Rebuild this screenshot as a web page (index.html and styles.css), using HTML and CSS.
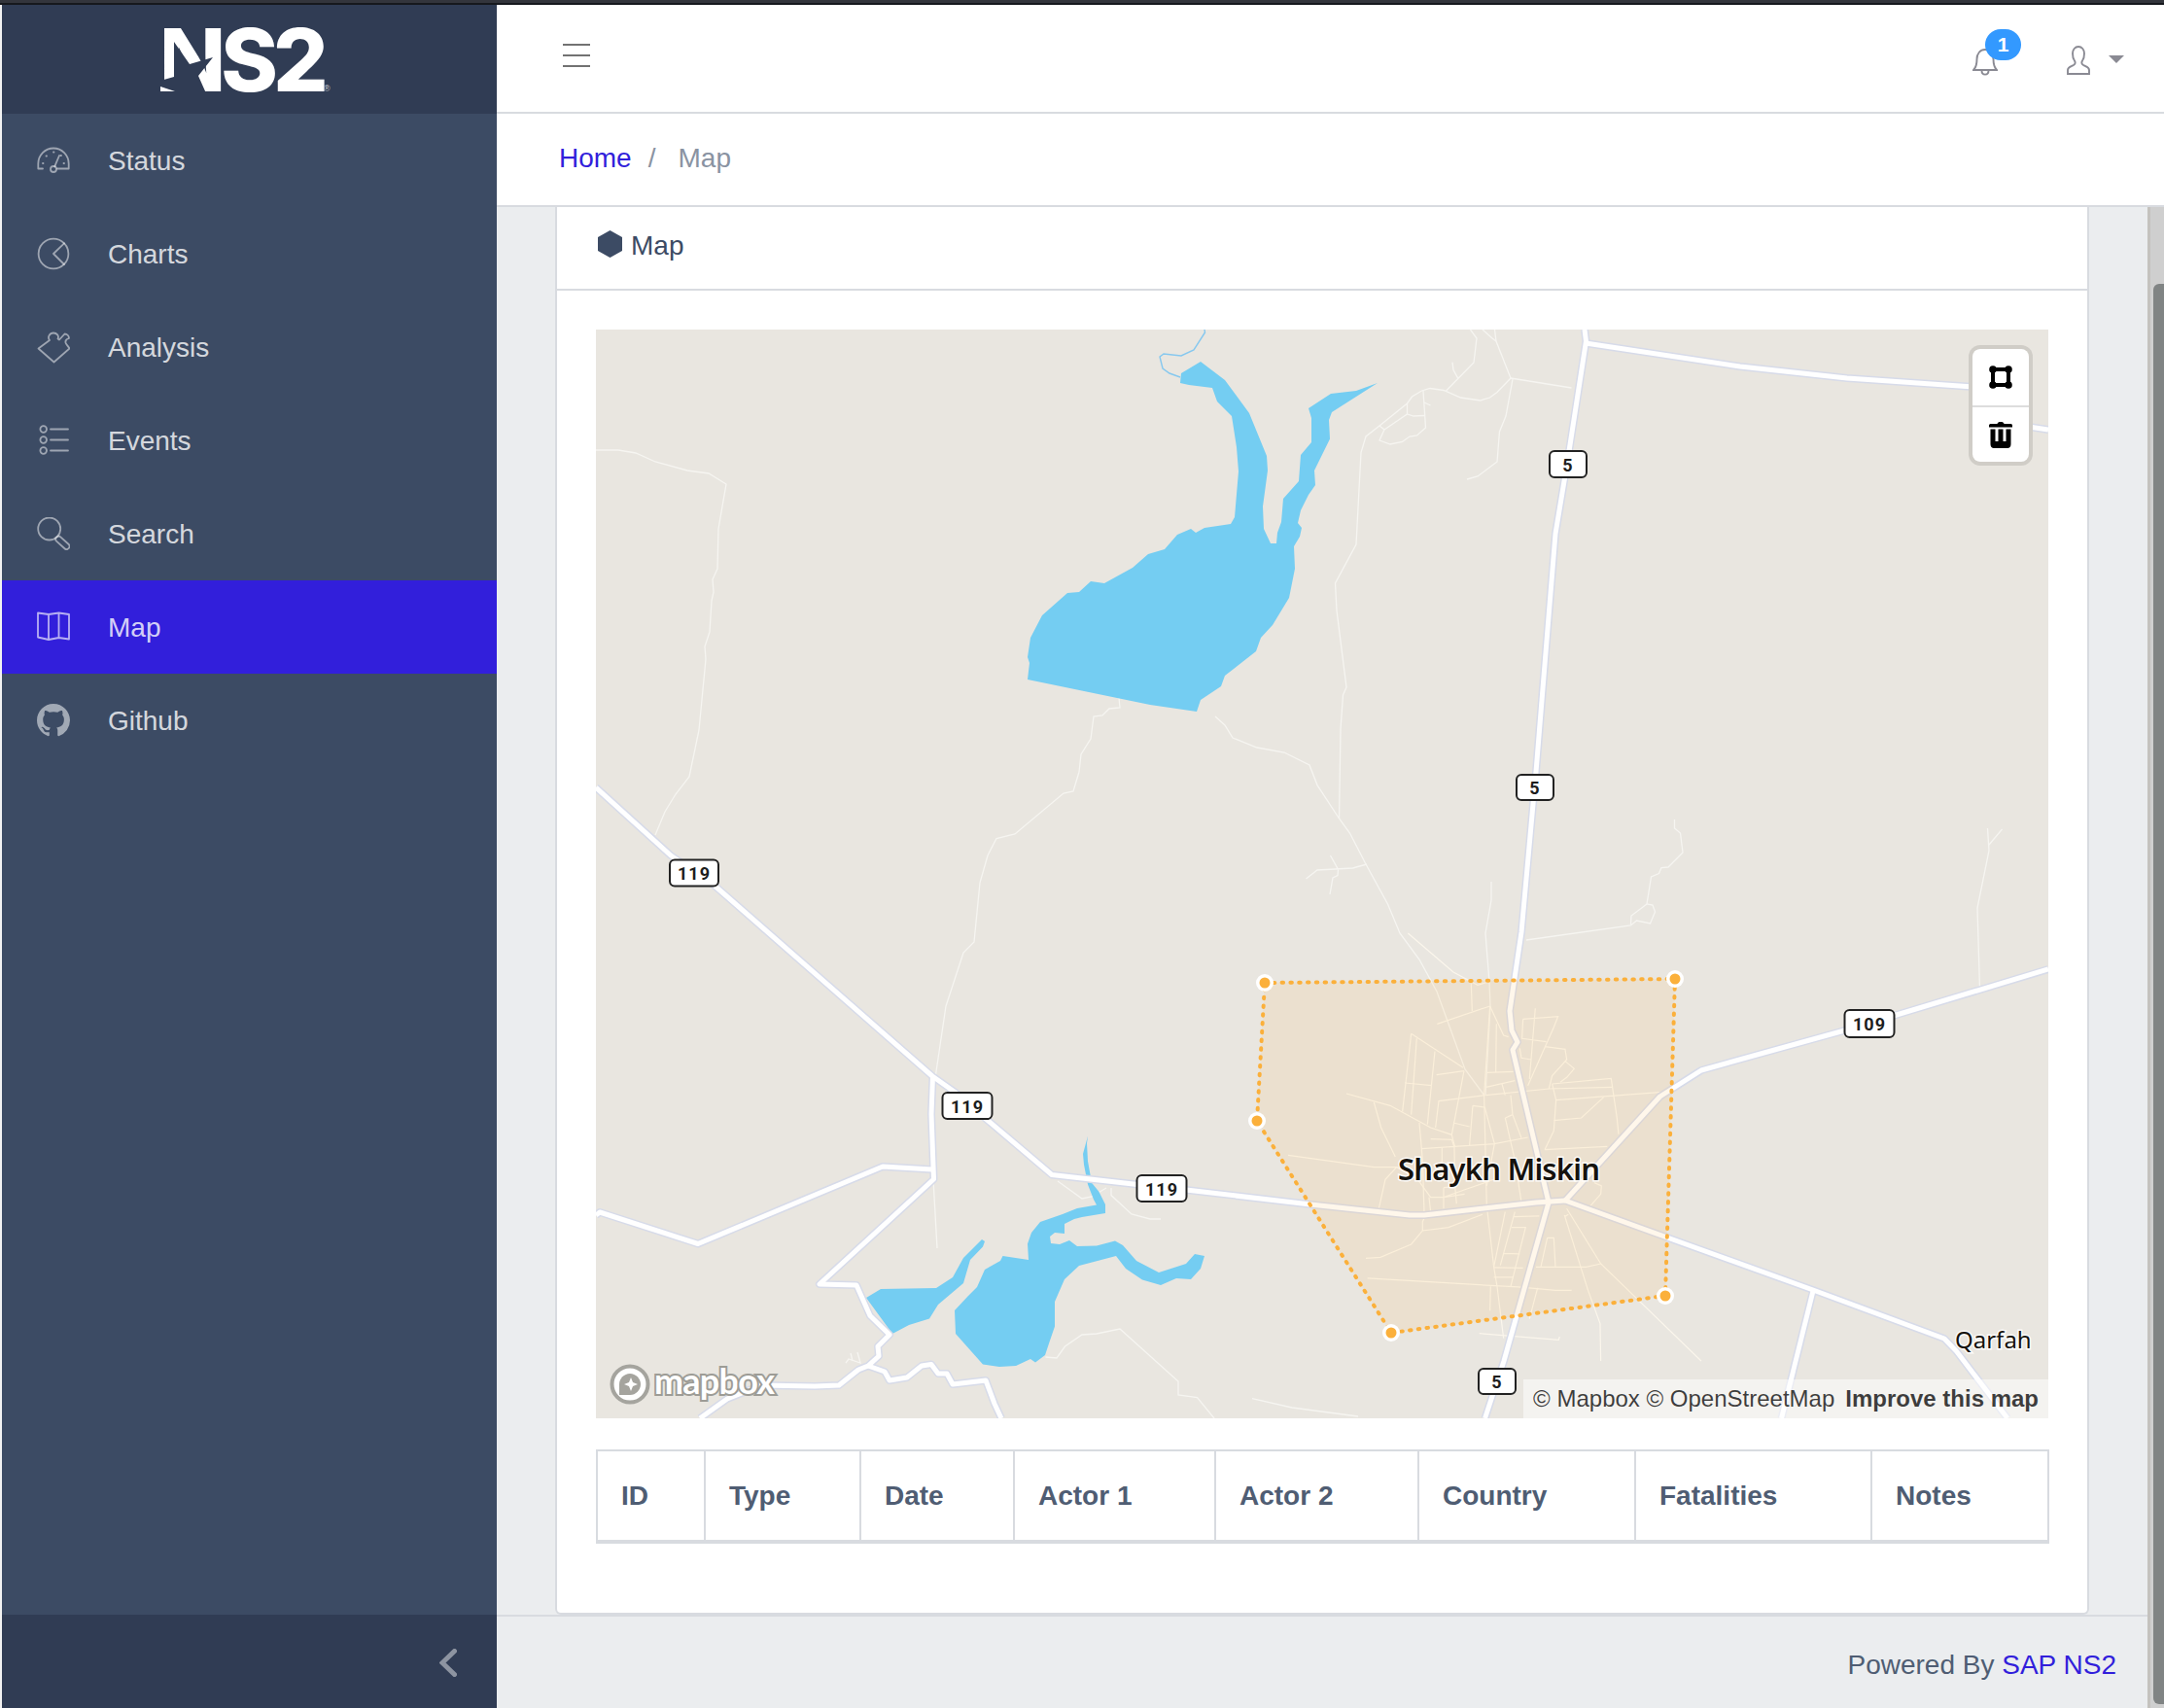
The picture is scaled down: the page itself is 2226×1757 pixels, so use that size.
FILE: index.html
```html
<!DOCTYPE html>
<html lang="en">
<head>
    <meta charset="UTF-8">
    <title>NS2 - Map</title>
    <link rel="stylesheet" href="styles.css">
</head>

<body>

<div class="window-edge"></div>

<div class="app">
    <!-- SIDEBAR -->
    <aside class="sidebar">
        <div class="brand">
            <svg class="brand-logo" viewBox="-5 -10 190 110">
                <text class="brand-text" x="-1" y="78">NS2</text>
                <polygon class="brand-cut" points="0,67 14,63 14,27 30,50 54,43 39,62 47,80 14,80 0,74"/>
                <polygon class="brand-fill" points="0,73 15,78 0,78"/>
                <text class="brand-reg" x="168" y="78">®</text>
            </svg>
        </div>

        <nav class="nav">
            <a class="nav-item">
                <svg class="nav-icon" viewBox="0 0 34 34">
                    <path d="M6 25.500H1.300V20.500A15.700 16 0 0 1 32.700 20.500V25.500H21"/>
                    <circle cx="17" cy="26" r="3"/>
                    <path d="M18.300 23.200 23 12M9.500 12.500h.5M17 8.500h.5M6 20h.5M27.500 20h.5M24.500 12h.5"/>
                </svg>
                <span>Status</span>
            </a>
            <a class="nav-item">
                <svg class="nav-icon" viewBox="0 0 34 34">
                    <circle cx="17" cy="17" r="15.400"/>
                    <path d="M28 6.300 17 17 28 28"/>
                </svg>
                <span>Charts</span>
            </a>
            <a class="nav-item">
                <svg class="nav-icon" viewBox="0 0 34 34">
                    <path d="M1.500 18.500 13 10C10.500 7 13 2.500 17 2.500 20.500 2.500 23 5.500 21.500 8.500L23 9.500 28.500 3.500C31 3.500 33 5.500 33 8 31 8.500 29 10 29.500 12.500 30 14.500 31.500 15 33.500 18.500L17.500 32.500Z"/>
                </svg>
                <span>Analysis</span>
            </a>
            <a class="nav-item">
                <svg class="nav-icon" viewBox="0 0 34 34">
                    <circle cx="6.700" cy="5.500" r="3.300"/>
                    <circle cx="6.700" cy="16.500" r="3.300"/>
                    <circle cx="6.700" cy="27.500" r="3.300"/>
                    <path d="M14 5.500H32M14 16.500H32M14 27.500H32"/>
                </svg>
                <span>Events</span>
            </a>
            <a class="nav-item">
                <svg class="nav-icon" viewBox="0 0 34 34">
                    <circle cx="12.700" cy="12" r="11.500"/>
                    <rect x="18" y="23" width="17" height="6" rx="3" transform="rotate(42 26 26)"/>
                </svg>
                <span>Search</span>
            </a>
            <a class="nav-item active">
                <svg class="nav-icon" viewBox="0 0 34 34">
                    <path d="M1 2.500 12 4 22.500 2.500 33 4V29.500L22.500 28 12 30 1 27.500ZM12 4V30M22.500 2.500V28"/>
                </svg>
                <span>Map</span>
            </a>
            <a class="nav-item">
                <svg class="nav-icon nav-icon-solid" viewBox="0 0 16 16">
                    <path d="M8 0C3.580 0 0 3.580 0 8c0 3.540 2.290 6.530 5.470 7.590.4.070.55-.17.55-.38 0-.19-.01-.82-.01-1.490-2.010.37-2.530-.49-2.690-.94-.09-.23-.48-.94-.82-1.130-.28-.15-.68-.52-.01-.53.63-.01 1.080.58 1.230.82.72 1.210 1.870.87 2.330.66.07-.52.28-.87.51-1.070-1.780-.2-3.640-.89-3.640-3.950 0-.87.31-1.590.82-2.150-.08-.2-.36-1.020.08-2.120 0 0 .67-.21 2.200.82.64-.18 1.320-.27 2-.27.68 0 1.360.09 2 .27 1.530-1.040 2.200-.82 2.200-.82.44 1.100.16 1.920.08 2.120.51.56.82 1.270.82 2.150 0 3.070-1.870 3.750-3.650 3.950.29.25.54.73.54 1.480 0 1.070-.01 1.930-.01 2.200 0 .21.15.46.55.38A8.013 8.013 0 0016 8c0-4.420-3.580-8-8-8z"/>
                </svg>
                <span>Github</span>
            </a>
        </nav>

        <div class="sidebar-toggle">
            <svg class="toggle-icon" viewBox="0 0 18 29">
                <path d="M15.500 2.500 3 14.500 15.500 26.500"/>
            </svg>
        </div>
    </aside>

    <div class="main">
        <!-- HEADER -->
        <header class="header">
            <svg class="burger" viewBox="0 0 28 26">
                <path d="M0 2H28M0 13H28M0 24H28"/>
            </svg>
            <div class="header-right">
                <div class="bell">
                    <svg class="bell-icon" viewBox="0 0 26 29">
                        <path d="M1 23C4 20 4.500 17 4.500 12 4.500 6 8 2 13 2S21.500 6 21.500 12C21.500 17 22 20 25 23ZM9.500 23.500C9.500 29 16.500 29 16.500 23.500"/>
                    </svg>
                    <span class="badge">1</span>
                </div>
                <svg class="user-icon" viewBox="0 0 24 30">
                    <path d="M1 29V25C1 22 4 21.500 7 20 9 19 9 17 8 15.500 6 13 6 10 6 8 6 4 8.500 1 12 1S18 4 18 8C18 10 18 13 16 15.500 15 17 15 19 17 20 20 21.500 23 22 23 25V29Z"/>
                </svg>
                <span class="caret"></span>
            </div>
        </header>

        <!-- BREADCRUMB -->
        <div class="breadcrumb">
            <a class="crumb-link">Home</a>
            <span class="crumb-sep">/</span>
            <span class="crumb-current">Map</span>
        </div>

        <div class="page-row">
            <div class="page-col">
                <main class="content">
                    <section class="card">
                        <div class="card-header">
                            <svg class="hex" viewBox="0 0 25 28">
                                <polygon points="12.500,0 25,7 25,21 12.500,28 0,21 0,7"/>
                            </svg>
                            <span>Map</span>
                        </div>
                        <div class="card-body">
                            <!-- PETA -->
                            <div class="map">
                                <svg class="map-svg" viewBox="0 0 1494 1120">
                                    <defs>
                                        <g id="roads">
                                            <path d="M0 471 77 541 122 572 346 768 370 785 400 811 469 869.500 557 879.500 607 885 735 900 837 911 852 911 967 898 997 896"/>
                                            <path d="M346.500 768 345 807 347.500 874 230 982 268 983 282 1014.500 302 1034 290 1046 291 1056 280 1066 270 1070 250 1086 225 1087 170 1086 135 1100 107 1120"/>
                                            <path d="M280 1066 297 1072 302 1081 320 1078 335 1066 345 1064.500 352 1074 361 1074 367 1085 401 1081 410 1105 417 1120"/>
                                            <path d="M0 911 4 908 105 940.500 295 861 346 864"/>
                                            <path d="M1017 0 1018.500 12 999 138 987 210 967 455 952 620 940 701 942 721 948 733 943 741 980 898 934 1061 914.500 1120"/>
                                            <path d="M1018 14 1177 38 1287 50 1417 59 1440 90 1474 100 1494 103"/>
                                            <path d="M997 896 1094.500 789 1137 762 1284.500 721 1334.500 706 1494 658"/>
                                            <path d="M997 896 1102 934 1252 988 1387 1038 1399.500 1051 1452 1120"/>
                                            <path d="M1252 989 1219.500 1120"/>
                                        </g>
                                    </defs>

                                    <rect class="map-bg" width="1494" height="1120"/>

                                    <!-- jalan kecil -->
                                    <g class="thin">
                                        <path d="M0 124 23 124 41 127 61 136 94 145 116 148 134 159 126 205 125 246 120 257 121 270 119 279 117 311 112 326 113 339 106 412 96 460 82 478 71 496 61 520"/>
                                        <path d="M538 379 539 389 528 390 521 397 512 398 509 421 499 437 497 455 491 475 481 477 431 519 412 523.500 403 541 395 569 389 630 378 641 360 696 349 770M347 874 351 945"/>
                                        <path d="M637 398 647 407 655 420 680 430 708 435 734 448 742 468.600 764.500 503 775.500 518 792 550 814.500 591 827 621 847 648 865 681 894 761 914 788"/>
                                        <path d="M924.500 0 926 12 941 50 927 64.500 919.500 70 909.500 73 889.500 70 872 62.500 858 60.500 849.500 63 839.500 69 834.500 76 806 99 792 110 787 126.500 782 221 760.500 261 762 289 772 368 768.500 376 766 411 764.500 503"/>
                                        <path d="M941 50 1003.500 60M943 51 936 89 929.500 105 927 136 907 151 896 154M874.500 63 903 34 906 9 899.500 0M887 50.600 882 41.500 881 33.600M912 0 922 9 926 12"/>
                                        <path d="M806 99 811 103 806 114 817 118 829.500 115.500 837 110 844.500 109 853.500 101 851 63M811 103 834.500 87 841 89 852 88.500M834.500 76 834.500 87M852 75 858.500 78"/>
                                        <path d="M755.500 541 763.500 555.500 763 561.500 758 564 755 581M730.500 565 742 556 778.500 554 793 550"/>
                                        <path d="M921 568 921 587 915 621 919 671 920 696 915 788"/>
                                        <path d="M1109.500 504 1109.500 513 1115.500 518 1118 538 1103 553 1096 553.500 1093.500 559.500 1085.500 563 1081 591 1087 592 1089.500 599 1084.500 611 1070.500 608 1064.500 613 957 628M1081 591 1065 603 1064.500 612"/>
                                        <path d="M1431.500 513 1433 536 1421 595 1423.500 678M1446.500 514 1433 530"/>
                                        <path d="M462.500 1057 474 1058 482.500 1046 500 1034 515 1033 539 1028 599 1082 599 1096 618.500 1098.500 636 1120M675 1099.600 716 1109 784 1118"/>
                                        <path d="M475 876 500 894 510 892 525 883M530 883 530 890.600 551 910 570 915 581 915"/>
                                        <path d="M257 1063 260 1059 272 1063 269 1052M262 1053 264 1061"/>
                                    </g>

                                    <!-- jalan dalam kota -->
                                    <g class="town" transform="translate(637 621) scale(.3333)">
                                        <path d="M595 0 735 120 810 160 845 150M848 225 890 315 905 320M848 225 685 280M790 155 793 240"/>
                                        <path d="M848 225 830 500 838 840 860 1030M868 280 866 430M840 430 920 427"/>
                                        <path d="M605 310 590 445 578 550M605 310 765 415M622 325 605 560M678 365 655 590M683 437 768 425M585 462 668 470"/>
                                        <path d="M405 495 540 532 665 600 730 622 740 660M490 522 512 600 556 690M768 425 730 622M735 585 785 597"/>
                                        <path d="M832 500 690 518 680 600M836 475 925 455M835 500 1030 480 1225 475M885 465 895 500"/>
                                        <path d="M912 500 918 560 945 632M895 570 918 560M895 570 925 700 945 830"/>
                                        <path d="M795 532 832 537 862 650 838 780M795 532 785 655M638 665 862 650 965 630M665 635 730 637 738 660 740 780M630 585 640 700 645 860M700 660 700 710"/>
                                        <path d="M225 685 490 722 560 722 525 760 505 850M560 722 625 760 665 815 705 815 775 790M705 785 705 850M740 780 745 835M705 815 770 805M660 815 665 860M705 785 740 782M775 790 860 760"/>
                                        <path d="M950 265 1058 257 1045 290 965 470M950 265 947 325 1022 335M988 232 970 450M940 355 945 385 975 390M1018 350 1080 358 1085 390 1040 440 1030 480M1080 395 1108 418 1085 445 1065 460"/>
                                        <path d="M1040 465 1222 448 1240 570 1245 620M1040 465 1052 515 1045 610 1017 668M1052 515 1380 490M1200 505 1130 570 1045 578M1017 668 1210 658M1170 770 1192 780 1190 805 1155 845"/>
                                        <path d="M825 868 720 908 640 918 605 960 510 1000 465 1003M640 918 640 890 650 870M895 860 860 1030 870 1090 890 1250M925 860 880 1025M920 875 1000 873M915 908 958 908 912 1090M890 988 940 990"/>
                                        <path d="M860 1032 950 1033M990 1030 1145 1030 1190 1020M1025 940 1045 940 1050 1028M1025 940 1005 1030M860 1062 920 1062M470 1065 935 1092 1050 1102 1100 1102M850 1090 848 1165M995 1095 970 1190M815 1235 1060 1255 1063 1245"/>
                                        <path d="M1085 850 1190 1020 1500 1320M1078 870 1150 1100 1188 1205 1190 1320M1078 875 1090 868"/>
                                    </g>

                                    <!-- air -->
                                    <g class="water">
                                        <polygon points="622,33 647,52 672,86 690,130 691,145 686,182 687,205 694,220 700,220 701,209 705,198 707,174 723,156 725,129 736,116 736,91 733,81 756,66 782,63 804,55 757,85 754,93 755,112.500 739,145 740,160 733,170 725,186 722,199 726,204 724,213 718,223 719,246 713,276 696,304 684,317 679,331 647,356 643,367 622,381 618,393 570,386 444,360 446,343 444,337 447,317 459,294 485,271 497,270 509,259 523,261 552,245 568,231 585,226 598,211 612,205 617,209 626,204 653,200 657,193 661,146 659,121 654,89 639,74 634,60 610,57 601,55 602,45"/>
                                        <polygon points="278,996 293,987 350,986 367,975 378,955 397,936 400,938 398,943.500 385,957 378,981 352,1003 343,1017.500 322,1024 305,1033"/>
                                        <polygon points="506,829.600 501,848 502,859 506,879.500 512,895 515,900.600 495,904 480,910 457,918 448,929 444,940.600 445,957 418.500,953 416,958 400,967 392,985 383,994 369,1009 370,1033 398,1064.500 415,1067 432,1066 447,1059 452,1062.600 462,1055 467,1040 472,1025.600 472,1000 482,977 497,963 535,953 545,966 562,977.500 581,983 597,976 612,977 622,966 626,953 616,951 607,961 579,970 556,958 542,942 534,937.600 515,942.400 495,943 487,937 477,941 468,940 467,933 472,929 482,930 482,920 492,915 500,913 524,909 524,900 517.500,887 510,877.700 506,855.500 505,837"/>
                                    </g>
                                    <path class="stream" d="M626 0 626.500 3 615 21 602 27 584 25 580 28 583 40 590 45 601 49"/>

                                    <use href="#roads" class="road-casing"/>
                                    <use href="#roads" class="road"/>

                                    <!-- area terpilih -->
                                    <polygon class="area" points="688,672 1110,668 1100,994 818,1032 680,814"/>
                                    <polygon class="area-line" points="688,672 1110,668 1100,994 818,1032 680,814"/>
                                    <g class="vertex"><circle cx="688" cy="672" r="9"/><circle class="dot" cx="688" cy="672" r="5.500"/></g>
                                    <g class="vertex"><circle cx="1110" cy="668" r="9"/><circle class="dot" cx="1110" cy="668" r="5.500"/></g>
                                    <g class="vertex"><circle cx="1100" cy="994" r="9"/><circle class="dot" cx="1100" cy="994" r="5.500"/></g>
                                    <g class="vertex"><circle cx="818" cy="1032" r="9"/><circle class="dot" cx="818" cy="1032" r="5.500"/></g>
                                    <g class="vertex"><circle cx="680" cy="814" r="9"/><circle class="dot" cx="680" cy="814" r="5.500"/></g>

                                    <text class="place place-big" x="825" y="875" textLength="208">Shaykh Miskin</text>
                                    <text class="place place-small" x="1398" y="1048">Qarfah</text>

                                    <!-- nomor jalan -->
                                    <g class="shield"><rect x="981" y="125" width="38" height="27" rx="5"/><text x="1000" y="139">5</text></g>
                                    <g class="shield"><rect x="947" y="458" width="38" height="26" rx="5"/><text x="966" y="471.500">5</text></g>
                                    <g class="shield"><rect x="908" y="1069" width="38" height="26" rx="5"/><text x="927" y="1082.500">5</text></g>
                                    <g class="shield"><rect x="76" y="545.500" width="50" height="27" rx="5"/><text x="101" y="559.500">119</text></g>
                                    <g class="shield"><rect x="356.500" y="785" width="51" height="27" rx="5"/><text x="382" y="799">119</text></g>
                                    <g class="shield"><rect x="556.500" y="870" width="51" height="27" rx="5"/><text x="582" y="884">119</text></g>
                                    <g class="shield"><rect x="1284.500" y="700" width="51" height="28" rx="5"/><text x="1310" y="714.500">109</text></g>

                                    <!-- logo mapbox -->
                                    <circle class="mb-ring" cx="35" cy="1085" r="18.500"/>
                                    <path class="mb-leaf" d="M24 1096V1085C24 1079 29 1074 35 1074S46 1079 46 1085 41 1096 35 1096Z"/>
                                    <path class="mb-star" d="M36 1078 38 1083 43 1085 38 1087 36 1092 34 1087 29 1085 34 1083Z"/>
                                    <text class="mb-text" x="60" y="1095" textLength="124">mapbox</text>
                                </svg>

                                <div class="draw-ctrl">
                                    <button class="draw-btn">
                                        <svg viewBox="0 0 24 24" class="draw-icon">
                                            <path class="draw-stroke" d="M4 4H20V20H4Z"/>
                                            <circle cx="4" cy="4" r="3.800"/><circle cx="20" cy="4" r="3.800"/>
                                            <circle cx="4" cy="20" r="3.800"/><circle cx="20" cy="20" r="3.800"/>
                                        </svg>
                                    </button>
                                    <button class="draw-btn">
                                        <svg viewBox="0 0 24 27" class="draw-icon">
                                            <path d="M0 3.500C0 2.500 1 2 2 2H8.500C9 .5 10 0 12 0S15 .5 15.500 2H22C23 2 24 2.500 24 3.500V5.500H0ZM1.500 7.500H22.500V23C22.500 25.500 21 27 19 27H5C3 27 1.500 25.500 1.500 23ZM6.500 7.500V20H9.500V7.500ZM14.500 7.500V20H17.500V7.500Z" fill-rule="evenodd"/>
                                        </svg>
                                    </button>
                                </div>

                                <div class="attrib">
                                    <span>© Mapbox © OpenStreetMap</span>
                                    <strong>Improve this map</strong>
                                </div>
                            </div>

                            <!-- TABEL -->
                            <table class="events-table">
                                <thead>
                                    <tr>
                                        <th>ID</th>
                                        <th>Type</th>
                                        <th>Date</th>
                                        <th>Actor 1</th>
                                        <th>Actor 2</th>
                                        <th>Country</th>
                                        <th>Fatalities</th>
                                        <th>Notes</th>
                                    </tr>
                                </thead>
                            </table>
                        </div>
                    </section>
                </main>

                <footer class="footer">
                    <span>Powered By <a class="crumb-link">SAP NS2</a></span>
                </footer>
            </div>

            <div class="scrollbar"><div class="scrollbar-thumb"></div></div>
        </div>
    </div>
</div>

</body>
</html>
```

FILE: styles.css
```css
/* ===== Dasar ===== */
* {
    box-sizing: border-box;
}

html, body {
    height: 100%;
}

body {
    margin: 0;
    height: 1757px;
    overflow: hidden;
    display: flex;
    flex-direction: column;
    background: #f2f2f2;
    font-family: "Liberation Sans", Arial, sans-serif;
    font-size: 28px;
    color: #3c4b64;
}

.window-edge {
    height: 5px;
    flex: none;
    background: #33353c;
    border-bottom: 2px solid #16181d;
}

.app {
    flex: 1;
    min-height: 0;
    display: flex;
    padding-left: 2px;
}

/* ===== Sidebar ===== */
.sidebar {
    width: 509px;
    flex: none;
    display: flex;
    flex-direction: column;
    background: #3c4b64;
}

.brand {
    height: 112px;
    flex: none;
    display: flex;
    align-items: center;
    justify-content: center;
    background: #303c54;
}

.brand-logo {
    width: 190px;
    height: 110px;
    margin-left: -3px;
}

.brand-text {
    font-family: Inter, "Liberation Sans", sans-serif;
    font-weight: 800;
    font-size: 89px;
    letter-spacing: -5px;
    fill: #fff;
}

.brand-cut {
    fill: #303c54;
}

.brand-fill {
    fill: #fff;
}

.brand-reg {
    font-size: 9px;
    fill: #c8ccd4;
}

.nav {
    flex: 1;
}

.nav-item {
    height: 96px;
    display: flex;
    align-items: center;
    gap: 39px;
    padding-left: 36px;
    color: rgba(255, 255, 255, 0.8);
}

.nav-item span {
    margin-top: 2px;
}

.nav-item.active {
    background: #321fdb;
}

.nav-icon {
    width: 34px;
    height: 34px;
    flex: none;
    fill: none;
    stroke: rgba(255, 255, 255, 0.5);
    stroke-width: 1.8;
    stroke-linecap: round;
    stroke-linejoin: round;
}

.nav-item.active .nav-icon {
    stroke: rgba(255, 255, 255, 0.65);
}

.nav-icon-solid {
    fill: rgba(255, 255, 255, 0.52);
    stroke: none;
}

.sidebar-toggle {
    height: 96px;
    flex: none;
    display: flex;
    align-items: center;
    justify-content: flex-end;
    padding: 0 41px 0 0;
    background: #303c54;
}

.toggle-icon {
    width: 18px;
    height: 29px;
    margin-top: 2px;
    fill: none;
    stroke: rgba(255, 255, 255, 0.45);
    stroke-width: 5;
    stroke-linecap: round;
}

/* ===== Header ===== */
.main {
    flex: 1;
    min-width: 0;
    display: flex;
    flex-direction: column;
}

.header {
    height: 112px;
    flex: none;
    display: flex;
    align-items: center;
    justify-content: space-between;
    padding: 0 41px 0 68px;
    background: #fff;
    border-bottom: 2px solid #d8dbe0;
}

.burger {
    width: 28px;
    height: 26px;
    margin-top: -6px;
    fill: none;
    stroke: #727272;
    stroke-width: 2.2;
}

.header-right {
    display: flex;
    align-items: center;
    margin-top: 6px;
}

.bell {
    position: relative;
    width: 26px;
    height: 29px;
    margin-right: 71px;
}

.bell-icon,
.user-icon {
    fill: none;
    stroke: #8a8a93;
    stroke-width: 1.9;
    display: block;
}

.bell-icon {
    width: 26px;
    height: 29px;
}

.badge {
    position: absolute;
    left: 13px;
    top: -19px;
    width: 37px;
    height: 32px;
    border-radius: 16px;
    background: #39f;
    color: #fff;
    font-size: 21px;
    font-weight: 700;
    line-height: 32px;
    text-align: center;
}

.user-icon {
    width: 24px;
    height: 30px;
    margin: -2px 19px 0 0;
}

.caret {
    width: 0;
    height: 0;
    margin-top: -4px;
    border-left: 8px solid transparent;
    border-right: 8px solid transparent;
    border-top: 8px solid #8a8a93;
}

/* ===== Breadcrumb ===== */
.breadcrumb {
    height: 96px;
    flex: none;
    display: flex;
    align-items: center;
    padding-left: 64px;
    padding-bottom: 2px;
    background: #fff;
    border-bottom: 2px solid #d8dbe0;
}

.crumb-link {
    color: #321fdb;
}

.crumb-sep {
    margin: 0 23px 0 17px;
    color: #8a93a2;
}

.crumb-current {
    color: #8a93a2;
}

/* ===== Isi Halaman ===== */
.page-row {
    flex: 1;
    min-height: 0;
    display: flex;
}

.page-col {
    flex: 1;
    min-width: 0;
    display: flex;
    flex-direction: column;
    background: #ebedef;
}

.content {
    flex: 1;
    min-height: 0;
    padding: 0 60px;
}

.card {
    height: 100%;
    background: #fff;
    border: 2px solid #d8dbe0;
    border-top: none;
    border-radius: 0 0 6px 6px;
}

.card-header {
    height: 86px;
    display: flex;
    align-items: center;
    gap: 9px;
    padding: 0 0 4px 42px;
    border-bottom: 2px solid #d8dbe0;
}

.hex {
    width: 25px;
    height: 28px;
    margin-top: -4px;
    fill: #3c4b64;
}

.card-body {
    padding: 40px 40px 0;
}

/* ===== Peta ===== */
.map {
    position: relative;
    width: 1494px;
    height: 1120px;
    overflow: hidden;
}

.map-svg {
    display: block;
    width: 1494px;
    height: 1120px;
}

.map-bg {
    fill: #e9e6e0;
}

.thin path {
    fill: none;
    stroke: #f6f5f1;
    stroke-width: 1.3;
}

.town path {
    fill: none;
    stroke: #fbf6ec;
    stroke-width: 3.6;
}

.water {
    fill: #74cdf2;
}

.stream {
    fill: none;
    stroke: #86c8ef;
    stroke-width: 1.4;
}

.road-casing,
.road {
    fill: none;
    stroke-linejoin: round;
}

.road-casing {
    stroke: #d7dbe9;
    stroke-width: 8;
}

.road {
    stroke: #fff;
    stroke-width: 5;
}

.area {
    fill: #fbb03b;
    fill-opacity: 0.1;
}

.area-line {
    fill: none;
    stroke: #fbb03b;
    stroke-width: 4;
    stroke-dasharray: 1.5 7.3;
    stroke-linecap: round;
}

.vertex {
    fill: #fff;
}

.vertex .dot {
    fill: #fbb03b;
}

.place {
    font-family: "Noto Sans", sans-serif;
    fill: #15120d;
    stroke: #fff;
    stroke-opacity: 0.85;
    stroke-width: 3;
    paint-order: stroke;
}

.place-big {
    font-size: 31px;
    font-weight: 600;
}

.place-small {
    font-size: 24px;
}

.shield rect {
    fill: #fff;
    stroke: #222;
    stroke-width: 2;
}

.shield text {
    font-family: Roboto, "Liberation Sans", sans-serif;
    font-size: 18px;
    font-weight: 700;
    letter-spacing: 1px;
    fill: #1d1d1d;
    text-anchor: middle;
    dominant-baseline: central;
}

.mb-ring {
    fill: #fff;
    stroke: #a5a49e;
    stroke-width: 4;
}

.mb-leaf {
    fill: #a5a49e;
}

.mb-star {
    fill: #fff;
}

.mb-text {
    font-family: Lato, "Noto Sans", sans-serif;
    font-size: 36px;
    font-weight: 700;
    fill: #fff;
    stroke: #9d9c96;
    stroke-width: 4;
    paint-order: stroke;
}

/* tombol gambar di atas peta */
.draw-ctrl {
    position: absolute;
    top: 20px;
    right: 20px;
    width: 58px;
    background: #fff;
    border-radius: 8px;
    box-shadow: 0 0 0 4px #d0cdc7;
}

.draw-btn {
    display: flex;
    align-items: center;
    justify-content: center;
    width: 58px;
    height: 58px;
    padding: 0;
    border: none;
    background: none;
}

.draw-btn + .draw-btn {
    border-top: 2px solid #ddd;
}

.draw-icon {
    width: 24px;
    fill: #000;
}

.draw-stroke {
    fill: none;
    stroke: #000;
    stroke-width: 4;
}

.attrib {
    position: absolute;
    right: 0;
    bottom: 0;
    height: 40px;
    display: flex;
    align-items: center;
    gap: 11px;
    padding: 0 10px;
    background: rgba(255, 255, 255, 0.5);
    color: rgba(0, 0, 0, 0.75);
    font-size: 24px;
}

/* ===== Tabel ===== */
.events-table {
    width: 1493px;
    margin-top: 32px;
    border-collapse: collapse;
    table-layout: fixed;
}

.events-table th {
    height: 94px;
    padding: 0 0 0 24px;
    border: 2px solid #d8dbe0;
    border-bottom-width: 4px;
    color: #4f5d73;
    font-size: 28px;
    font-weight: 700;
    text-align: left;
}

.events-table th:nth-child(1) { width: 111px; }
.events-table th:nth-child(2) { width: 160px; }
.events-table th:nth-child(3) { width: 158px; }
.events-table th:nth-child(4) { width: 207px; }
.events-table th:nth-child(5) { width: 209px; }
.events-table th:nth-child(6) { width: 223px; }
.events-table th:nth-child(7) { width: 243px; }
.events-table th:nth-child(8) { width: 182px; }

/* ===== Footer ===== */
.footer {
    height: 96px;
    flex: none;
    display: flex;
    align-items: center;
    justify-content: flex-end;
    padding: 6px 32px 0 0;
    border-top: 2px solid #d8dbe0;
    color: #4f5d73;
}

/* ===== Scrollbar ===== */
.scrollbar {
    width: 17px;
    flex: none;
    padding: 79px 0 4px 3px;
    background: #cfcfcf;
    border-left: 3px solid #c4c2be;
}

.scrollbar-thumb {
    height: 100%;
    background: #808484;
    border-radius: 6px 0 0 6px;
}
```
